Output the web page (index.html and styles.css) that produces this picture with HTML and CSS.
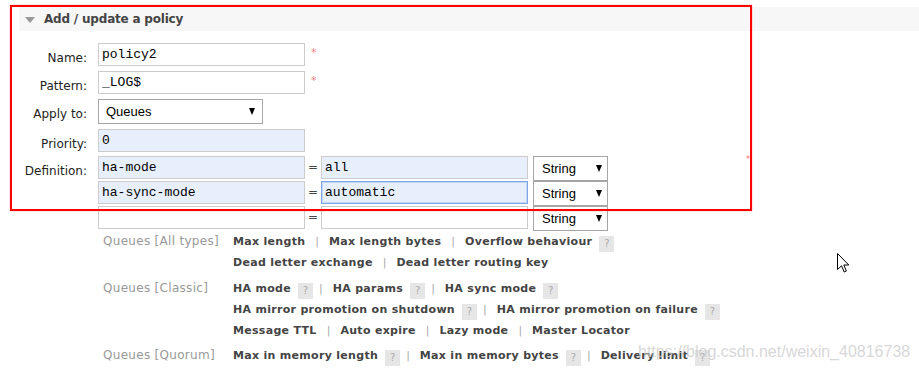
FILE: index.html
```html
<!DOCTYPE html>
<html lang="en">
<head>
    <meta charset="UTF-8">
    <meta name="viewport" content="width=device-width, initial-scale=1.0">
    <title>Add / update a policy</title>
    <link rel="stylesheet" href="styles.css">
</head>
<body>
    <div class="section">
        <h2 class="section-head"><span class="toggle"></span>Add / update a policy</h2>

        <form class="policy-form">
            <div class="form-row">
                <label for="name">Name:</label>
                <div class="field">
                    <input type="text" id="name" class="text" value="policy2">
                    <span class="mand">*</span>
                </div>
            </div>
            <div class="form-row">
                <label for="pattern">Pattern:</label>
                <div class="field">
                    <input type="text" id="pattern" class="text" value="_LOG$">
                    <span class="mand">*</span>
                </div>
            </div>
            <div class="form-row">
                <label for="applyTo">Apply to:</label>
                <div class="field">
                    <span class="select-wrap apply">
                        <select id="applyTo">
                            <option>Queues</option>
                            <option>Exchanges</option>
                        </select>
                    </span>
                </div>
            </div>
            <div class="form-row">
                <label for="priority">Priority:</label>
                <div class="field">
                    <input type="text" id="priority" class="text filled" value="0">
                </div>
            </div>
            <div class="form-row def-row">
                <label>Definition:</label>
                <div class="definition">
                    <div class="def-line">
                        <input type="text" class="text filled" value="ha-mode">
                        <span class="eq">=</span>
                        <input type="text" class="text filled" value="all">
                        <span class="select-wrap type"><select><option>String</option><option>Number</option></select></span>
                    </div>
                    <div class="def-line">
                        <input type="text" class="text filled" value="ha-sync-mode">
                        <span class="eq">=</span>
                        <input type="text" class="text filled focused" value="automatic">
                        <span class="select-wrap type"><select><option>String</option><option>Number</option></select></span>
                    </div>
                    <div class="def-line">
                        <input type="text" class="text">
                        <span class="eq">=</span>
                        <input type="text" class="text">
                        <span class="select-wrap type"><select><option>String</option><option>Number</option></select></span>
                    </div>
                </div>
            </div>
        </form>

        <div class="arg-help">
            <div class="arg-group">
                <span class="arg-label">Queues [All types]</span>
                <div class="arg-links">
                    <div class="arg-line">
                        <span class="arg">Max length</span><span class="sep">|</span><span class="arg">Max length bytes</span><span class="sep">|</span><span class="arg">Overflow behaviour</span><span class="help">?</span>
                    </div>
                    <div class="arg-line">
                        <span class="arg">Dead letter exchange</span><span class="sep">|</span><span class="arg">Dead letter routing key</span>
                    </div>
                </div>
            </div>
            <div class="arg-group">
                <span class="arg-label">Queues [Classic]</span>
                <div class="arg-links">
                    <div class="arg-line">
                        <span class="arg">HA mode</span><span class="help">?</span><span class="sep">|</span><span class="arg">HA params</span><span class="help">?</span><span class="sep">|</span><span class="arg">HA sync mode</span><span class="help">?</span>
                    </div>
                    <div class="arg-line">
                        <span class="arg">HA mirror promotion on shutdown</span><span class="help">?</span><span class="sep">|</span><span class="arg">HA mirror promotion on failure</span><span class="help">?</span>
                    </div>
                    <div class="arg-line">
                        <span class="arg">Message TTL</span><span class="sep">|</span><span class="arg">Auto expire</span><span class="sep">|</span><span class="arg">Lazy mode</span><span class="sep">|</span><span class="arg">Master Locator</span>
                    </div>
                </div>
            </div>
            <div class="arg-group">
                <span class="arg-label">Queues [Quorum]</span>
                <div class="arg-links">
                    <div class="arg-line">
                        <span class="arg">Max in memory length</span><span class="help">?</span><span class="sep">|</span><span class="arg">Max in memory bytes</span><span class="help">?</span><span class="sep">|</span><span class="arg">Delivery limit</span><span class="help">?</span>
                    </div>
                </div>
            </div>
        </div>
    </div>

    <!-- annotation overlays from the screenshot -->
    <div class="highlight-box"></div>
    <span class="stray-mark">*</span>
    <svg class="cursor" width="13" height="20" viewBox="0 0 13 20">
        <path d="M0.5 0.5 L0.5 16.5 L4.5 12.8 L7.2 19 L9.4 18 L6.8 12 L11.8 12 Z" fill="#fff" stroke="#000" stroke-width="1" stroke-linejoin="miter"/>
    </svg>
    <div class="watermark">https://blog.csdn.net/weixin_40816738</div>
</body>
</html>
```

FILE: styles.css
```css
body {
    font-family: "DejaVu Sans", Verdana, sans-serif;
    font-size: 12px;
    color: #222;
    margin: 0;
    position: relative;
    width: 919px;
    height: 371px;
    overflow: hidden;
    background: #fff;
}
.section {
    margin-left: 19px;
    padding-top: 7px;
}
.section-head {
    display: flex;
    align-items: center;
    height: 24px;
    margin: 0;
    background-color: #f7f7f7;
    color: #444;
    font-size: 12px;
    font-weight: bold;
    letter-spacing: -0.2px;
}
.toggle {
    width: 0;
    height: 0;
    margin: 1px 9px 0 6px;
    border-left: 5px solid transparent;
    border-right: 5px solid transparent;
    border-top: 6px solid #999;
}
.policy-form {
    margin-top: 12px;
}
.form-row {
    display: grid;
    grid-template-columns: 68px 1fr;
    column-gap: 11px;
    margin-bottom: 5px;
}
.form-row label {
    text-align: right;
    padding-top: 8px;
    line-height: 14px;
    color: #222;
}
.def-row {
    margin-top: -1px;
    margin-bottom: 0;
}
.field {
    display: flex;
    align-items: flex-start;
}
input.text {
    box-sizing: border-box;
    width: 207px;
    height: 23px;
    margin: 0;
    padding: 0 3px;
    border: 1px solid #ccc;
    background-color: #fff;
    font-family: "Liberation Mono", "Courier New", monospace;
    font-size: 13px;
    color: #000;
    outline: none;
}
input.filled {
    background-color: #e8effc;
}
input.focused {
    border-color: #7ea6e4;
    box-shadow: inset 0 0 0 1px #c3d6f5;
}
.mand {
    margin-left: 6px;
    margin-top: 4px;
    font-size: 11px;
    line-height: 11px;
    color: #f08080;
}
.select-wrap {
    position: relative;
    display: inline-block;
}
.select-wrap select {
    appearance: none;
    -webkit-appearance: none;
    box-sizing: border-box;
    height: 25px;
    margin: 0;
    padding: 0 0 0 7px;
    border: 1px solid #a6a6a6;
    border-radius: 0;
    background: #fff;
    font-family: "Liberation Sans", Arial, sans-serif;
    font-size: 13px;
    color: #000;
}
.select-wrap::after {
    content: "";
    position: absolute;
    top: 9px;
    right: 8px;
    border-left: 3px solid transparent;
    border-right: 3px solid transparent;
    border-top: 7px solid #000;
    pointer-events: none;
}
.apply select {
    width: 165px;
}
.type select {
    width: 75px;
    padding-left: 8px;
}
.type::after {
    right: 6px;
}
.def-line {
    display: flex;
    align-items: flex-start;
    height: 25px;
}
.eq {
    width: 16px;
    text-align: center;
    line-height: 22px;
    color: #444;
}
.def-line .type {
    margin-left: 5px;
}
.arg-help {
    margin-left: 84px;
    font-size: 11px;
    line-height: 21px;
}
.arg-group {
    display: grid;
    grid-template-columns: 130px 1fr;
    margin-bottom: 4px;
}
.arg-group:first-child {
    margin-bottom: 5px;
}
.arg-label {
    color: #999;
    font-size: 12px;
    letter-spacing: 0.3px;
}
.arg {
    font-weight: bold;
    color: #444;
    letter-spacing: 0.3px;
}
.sep {
    margin: 0 10px;
    color: #aaa;
}
.help {
    display: inline-block;
    width: 15px;
    height: 16px;
    margin-left: 7px;
    line-height: 16px;
    vertical-align: -2px;
    text-align: center;
    background-color: #e6e6e6;
    color: #aaa;
    font-size: 10px;
}
.help + .sep {
    margin-left: 6px;
}
.highlight-box {
    position: absolute;
    left: 10px;
    top: 5px;
    width: 738px;
    height: 202px;
    border: 2px solid #f00;
    box-shadow: 0 0 1px #f66;
    pointer-events: none;
}
.stray-mark {
    position: absolute;
    left: 746px;
    top: 155px;
    font-size: 8px;
    color: #f66;
}
.cursor {
    position: absolute;
    left: 837px;
    top: 253px;
}
.watermark {
    position: absolute;
    left: 638px;
    top: 343px;
    font-family: "Liberation Sans", Arial, sans-serif;
    font-size: 16px;
    color: rgba(205, 205, 205, 0.8);
    white-space: nowrap;
}
```
